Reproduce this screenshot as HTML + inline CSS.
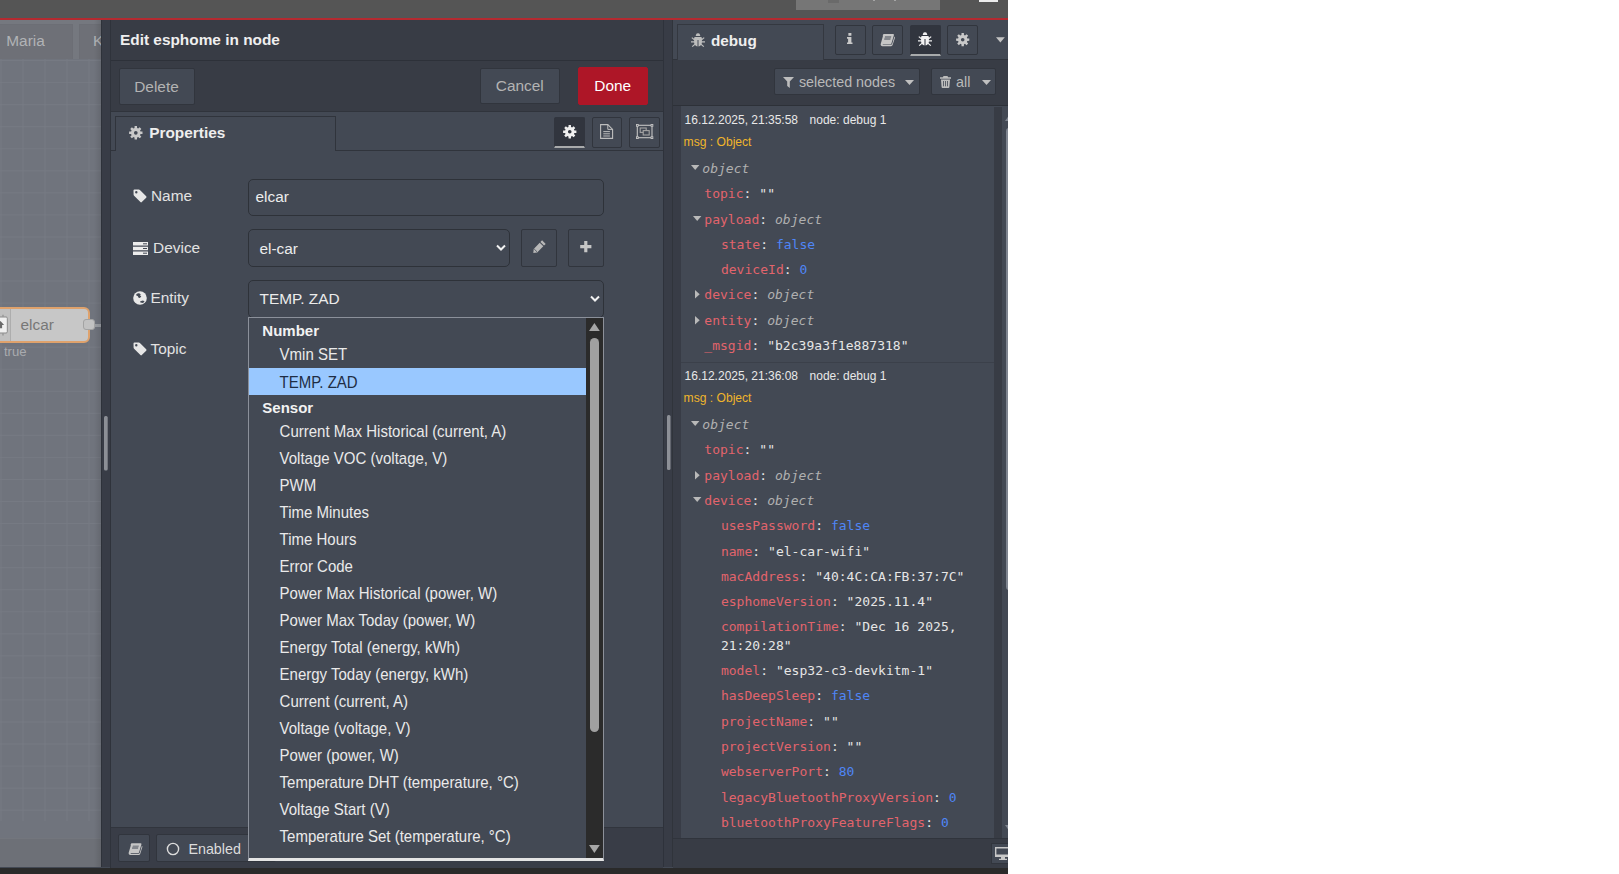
<!DOCTYPE html>
<html lang="en">
<head>
<meta charset="utf-8">
<title>Node-RED</title>
<style>
*{box-sizing:border-box;margin:0;padding:0}
html,body{width:1619px;height:874px;background:#fff;overflow:hidden}
body{font-family:"Liberation Sans",Arial,sans-serif;font-size:15.4px;color:#e4e4e4;position:relative}
#app{position:absolute;left:0;top:0;width:1008px;height:874px;overflow:hidden;background:#434954}
.abs{position:absolute}
svg{display:block;position:absolute;overflow:visible}
/* header */
#hdr{left:0;top:0;width:1008px;height:18px;background:#555555}
#hdrline{left:0;top:17.6px;width:1008px;height:2.8px;background:#b52a30}
#deploy{left:796px;top:0;width:144px;height:10px;background:#767676}
#deploysq{left:828px;top:0;width:11px;height:3px;background:#6a6a6a}
#burger{left:978.5px;top:0;width:19.5px;height:2px;background:#ececec}
/* workspace */
#ws{left:0;top:20px;width:101px;height:847px;background:#70747d;overflow:hidden}
#wstabs{left:0;top:0;width:102px;height:40.5px;background:#75787f}
.wstab{top:4px;height:35.3px;background:#6e7077;border:1px solid #6c6e75;border-bottom:none;color:#b1b3b6;font-size:15.4px;line-height:34px;white-space:nowrap}
#grid{left:0;top:39.3px;width:102px;height:762.2px;
 background-color:#70747d;
 background-image:linear-gradient(to right,#767a83 1px,transparent 1px),linear-gradient(to bottom,#767a83 1px,transparent 1px);
 background-size:22px 22.06px;background-position:0.5px 1.1px}
#wsfoot{left:0;top:818px;width:102px;height:30px;background:#6d7077;border-top:1px solid #73767d}
#node{left:-40px;top:287px;width:130px;height:35.7px;background:#c7c7c7;border:2px solid #dfa26c;border-radius:6px}
#nodeicon{left:-40px;top:289px;width:51px;height:31.7px;background:#c0c0c0;border-right:1px solid #adadad}
#nodelabel{left:20.5px;top:294.6px;font-size:15.4px;color:#777;line-height:20px}
#port{left:83px;top:298.6px;width:11.5px;height:11.5px;background:#c2c2c2;border:1px solid #a3a3a3;border-radius:3px}
#wire{left:94.5px;top:303.5px;width:8px;height:3px;background:#9b9ea3}
#status{left:3.9px;top:324.4px;font-size:13.1px;color:#a9abaf;line-height:16px}
/* tray */
#sepL{left:101px;top:20px;width:9.5px;height:847px;background:#383c46;border-left:1px solid #2e323a}
#tray{left:110px;top:20px;width:553px;height:847px;background:#434954}
#trayhdr{left:0;top:0;width:553px;height:40.5px;background:#383c45;border-bottom:1px solid #2d3139}
#traytitle{left:10px;top:0;line-height:39px;font-weight:bold;font-size:15.4px;color:#efefef}
#traybar{left:0;top:40.5px;width:553px;height:51px;background:#383c45;border-bottom:1px solid #30343c}
.btn{border-radius:2px;background:#434954;border:1px solid #31353d;color:#b3b3b3;font-size:15.4px;text-align:center}
#bDelete{left:8.5px;top:48px;width:76px;height:37px;line-height:35.5px;font-size:15.4px}
#bCancel{left:369.5px;top:48px;width:80.5px;height:36.3px;line-height:34.5px;font-size:15.4px}
#bDone{left:467.5px;top:47px;width:70.5px;height:38.2px;line-height:36.5px;font-size:15.4px;background:#ae1627;border-color:#ae1627;color:#fff}
#tabline{left:0;top:129.7px;width:553px;height:1px;background:#30343c}
#ptab{left:5px;top:96px;width:221px;height:35px;background:#434954;border:1px solid #30343c;border-bottom:none}
#ptabtxt{left:39.2px;top:102.8px;font-weight:bold;font-size:15.4px;line-height:20px;color:#eee}
.tbtn{border-radius:2px;top:97px;width:31px;height:31px;background:#434954;border:1px solid #31353d}
.tbtn.act{border-radius:2px 2px 0 0;background:#31353e;border-color:#31353e;border-bottom:2px solid #a8aaab}
.lbl{font-size:15.4px;color:#e2e2e2;line-height:20px;white-space:nowrap}
.inp{background:#434954;border:1px solid #2e3239;border-radius:5px;color:#ececec;font-size:15.4px;white-space:nowrap}
#trayfoot{left:0;top:806.8px;width:553px;height:41px;background:#393d47;border-top:1px solid #31353d}
/* dropdown */
#dd{left:248px;top:317.2px;width:356px;height:543.8px;background:#434954;border-left:1px solid #8b909a;border-top:1px solid #8b909a;border-right:1px solid #8c9099;border-bottom:3px solid #e4e4e4;overflow:hidden}
#dd .g{position:absolute;left:13.3px;margin-top:0.6px;font-weight:bold;font-size:15px;line-height:27px;color:#f2f2f2;white-space:nowrap}
#dd .o{transform:scaleY(1.06);transform-origin:0 19px;position:absolute;left:30.6px;font-size:15px;line-height:27px;color:#eaeaea;white-space:nowrap}
#ddsel{left:0;top:50px;width:337px;height:27px;background:#99c8ff}
#ddtrack{left:337px;top:0;width:17px;height:541px;background:#2b2b2b}
#ddthumb{left:340.9px;top:19.6px;width:9.1px;height:394px;background:#a0a0a0;border-radius:4.6px}
/* sidebar */
#sepR{left:663px;top:20px;width:10.2px;height:847px;background:#383c46;border-left:1px solid #2e323b;border-right:1px solid #30343b}
#sb{left:672.5px;top:20px;width:336px;height:847px;background:#434954}
#sbtabs{left:0;top:0;width:336px;height:39.5px;background:#434954;border-bottom:1px solid #30343c}
#dtab{left:4.5px;top:4px;width:147px;height:36px;background:#434954;border:1px solid #343840;border-bottom:none}
#dtabtxt{left:38px;top:11px;font-weight:bold;font-size:15.25px;line-height:20px;color:#eee}
.sbtn{border-radius:2px;top:5px;width:31px;height:30.2px;background:#434954;border:1px solid #31353d}
.sbtn.act{border-radius:2px 2px 0 0;background:#31353e;border-color:#31353e;border-bottom:2px solid #a8aaab;height:31px}
#sbbar{left:0;top:39.5px;width:336px;height:46px;background:#383c45;border-bottom:1px solid #2d3138}
.fbtn{border-radius:2px;top:48.3px;height:27px;background:#434954;border:1px solid #31353d;color:#b5b5b5;font-size:14.3px;line-height:25px;white-space:nowrap}
#sbfoot{left:0;top:818px;width:336px;height:29.5px;background:#383c45;border-top:1px solid #30343c}
#msgs{left:0;top:86px;width:336px;height:732px;background:#434954;overflow:hidden}
#mL{left:0;top:0;width:8.5px;height:732px;background:#383c46}
#mR{left:321.5px;top:1px;width:8px;height:731px;background:#383c45}
#msep{left:8.5px;top:254.5px;width:313px;height:1px;background:#3b404a}
.meta{font-size:12px;color:#e8e8e8;line-height:16px;white-space:pre}
.mname{font-size:12.1px;color:#f0b52b;line-height:16px;white-space:pre}
.mono{font-family:"DejaVu Sans Mono","Liberation Mono",monospace;font-size:13px;letter-spacing:0.03px;line-height:18px;white-space:pre;color:#e6e6e6}
.k{color:#e2646c}.t{color:#b0b0b0;font-style:italic}.n{color:#4f86f7}.s{color:#e6e6e6}
#botbar{left:0;top:867.5px;width:1008px;height:7px;background:#2a2a2a}
</style>
</head>
<body>
<div id="app">
<div id="hdr" class="abs"></div>
<div id="deploy" class="abs"></div><div id="deploysq" class="abs"></div><div id="burger" class="abs"></div><div class="abs" style="left:873px;top:0;width:1.500px;height:1px;background:#a5a5a5"></div><div class="abs" style="left:894px;top:0;width:1.500px;height:1px;background:#a5a5a5"></div>
<div id="hdrline" class="abs"></div>
<div id="ws" class="abs">
 <div id="wstabs" class="abs">
  <div class="wstab abs" style="left:-60px;width:132.5px;padding-left:65.3px;line-height:32.5px">Maria</div>
  <div class="wstab abs" style="left:79px;width:60px;padding-left:13px;line-height:32.5px">K</div>
 </div>
 <div id="grid" class="abs"></div>
 <div id="node" class="abs"></div>
 <div id="nodeicon" class="abs"></div>
 <svg style="left:-8px;top:293.600px" width="17" height="22" viewBox="0 0 17 22"><rect x="0" y="3" width="15.300" height="16" rx="1.200" fill="#f0f0f0" stroke="#8a8a8a" stroke-width="1"/><path d="M3 3v-2.200M7 3v-2.200M11 3v-2.200M3 19v2.400M7 19v2.400M11 19v2.400" stroke="#9a9a9a" stroke-width="1.600"/><path d="M8.500 7l3.600 4h-2v3.200h-3.200v-3.200h-2z" fill="#6a6a6a"/></svg>
 <div id="nodelabel" class="abs">elcar</div>
 <div id="wire" class="abs"></div>
 <div id="port" class="abs"></div>
 <div id="status" class="abs">true</div>
 <div id="wsfoot" class="abs"></div>
 <div class="abs" style="left:94px;top:0;width:7px;height:847px;background:linear-gradient(to right,rgba(0,0,0,0),rgba(0,0,0,0.1))"></div>
</div>
<div id="sepL" class="abs"></div>
<svg style="left:104.4px;top:416px" width="4" height="55"><rect x="0" y="0" width="3.7" height="54.6" rx="1.5" fill="#8c8f96"/></svg>

<div id="tray" class="abs">
 <div id="trayhdr" class="abs"><div id="traytitle" class="abs">Edit esphome in node</div></div>
 <div id="traybar" class="abs"></div>
 <div id="bDelete" class="btn abs">Delete</div>
 <div id="bCancel" class="btn abs">Cancel</div>
 <div id="bDone" class="btn abs">Done</div>
 <div id="tabline" class="abs"></div>
 <div id="ptab" class="abs"></div>
 <svg id="icGear1" style="left:18.7px;top:105.8px" width="13.6" height="13.6" viewBox="0 0 14 14"><use href="#gear" fill="#c9c9c9"/></svg>
 <div id="ptabtxt" class="abs">Properties</div>
 <div class="tbtn act abs" style="left:443.5px"></div>
 <div class="tbtn abs" style="left:482px;width:30px"></div>
 <div class="tbtn abs" style="left:518.5px"></div>
 <svg style="left:452.750px;top:104.850px" width="13.500" height="13.500" viewBox="0 0 14 14"><use href="#gear" fill="#f0f0f0"/></svg>
 <svg style="left:490.200px;top:104.100px" width="13.200" height="15" viewBox="0 0 13.200 15"><path d="M0.600 0.600h7.200l4.800 4.800v9h-12z" fill="none" stroke="#bdbdbd" stroke-width="1.100"/><path d="M7.800 0.600v4.800h4.800" fill="none" stroke="#bdbdbd" stroke-width="1"/><path d="M3.300 7.600h6.600M3.300 9.800h6.600M3.300 12h6.600" stroke="#bdbdbd" stroke-width="1"/></svg>
 <svg style="left:525.900px;top:104px" width="17.300" height="15" viewBox="0 0 17.300 15"><rect x="1.300" y="1.300" width="14.700" height="12.400" fill="none" stroke="#c4c4c4" stroke-width="1.100"/><rect x="4.200" y="4" width="6" height="4.400" fill="none" stroke="#a4a4a4" stroke-width="1.100"/><rect x="7.200" y="6.600" width="6" height="4.400" fill="#434954" stroke="#a4a4a4" stroke-width="1.100"/><rect x="0" y="0" width="2.700" height="2.700" fill="#c4c4c4"/><rect x="14.600" y="0" width="2.700" height="2.700" fill="#c4c4c4"/><rect x="0" y="12.300" width="2.700" height="2.700" fill="#c4c4c4"/><rect x="14.600" y="12.300" width="2.700" height="2.700" fill="#c4c4c4"/><rect x="0.900" y="0.900" width="0.900" height="0.900" fill="#434954"/><rect x="15.500" y="0.900" width="0.900" height="0.900" fill="#434954"/><rect x="0.900" y="13.200" width="0.900" height="0.900" fill="#434954"/><rect x="15.500" y="13.200" width="0.900" height="0.900" fill="#434954"/></svg>

 <svg style="left:22.5px;top:169px" width="14" height="14" viewBox="0 0 14 14"><use href="#tag" fill="#e6e6e6"/></svg>
 <div class="lbl abs" style="left:41px;top:165.8px">Name</div>
 <div class="inp abs" style="left:137.5px;top:159px;width:356px;height:36.5px;line-height:33.6px;padding-left:7px">elcar</div>

 <svg style="left:22.5px;top:222px" width="15" height="13" viewBox="0 0 15 13"><path d="M0 0h15v3.6h-15zM0 4.7h15v3.6h-15zM0 9.4h15v3.6h-15z" fill="#ececec"/><path d="M10 1.8h4M10 6.5h4M10 11.2h4" stroke="#434954" stroke-width="1"/></svg>
 <div class="lbl abs" style="left:43.1px;top:218.2px">Device</div>
 <div class="inp abs" style="left:137.5px;top:209px;width:262px;height:38px;line-height:37px;padding-left:11px">el-car</div>
 <svg style="left:385.5px;top:224px" width="10" height="8" viewBox="0 0 10 8"><path d="M1 1.5l4 4 4-4" fill="none" stroke="#f2f2f2" stroke-width="2"/></svg>
 <div class="btn abs" style="left:410.5px;top:209px;width:36px;height:38px"></div>
 <div class="btn abs" style="left:457.5px;top:209px;width:36px;height:38px"></div>
 <svg style="left:422.600px;top:220.400px" width="13" height="13" viewBox="0 0 13 13"><path d="M9.100 0.300l3.600 3.600-1.700 1.700-3.600-3.600zM6.700 2.700l3.600 3.600-6.100 6.100-3.900 0.500 0.400-4z" fill="#b8b8b8"/><path d="M1.200 9l2.800 2.800" stroke="#434954" stroke-width="0.800"/></svg>
 <svg style="left:470px;top:221px" width="11.600" height="11.200" viewBox="0 0 12 12"><path d="M4.300 0h3.400v4.300h4.300v3.400h-4.300v4.300h-3.400v-4.300h-4.300v-3.400h4.300z" fill="#c6c6c6"/></svg>

 <svg style="left:22.5px;top:271px" width="14" height="14" viewBox="0 0 14 14"><circle cx="7" cy="7" r="6.8" fill="#e8e8e8"/><path d="M3.2 3.2c1.2-1 2.5-1.2 3.3-0.8l1.3 0.9-0.8 1 1.3 1.3-1.5 1.5-1.2-0.4-0.9-1.6-1.2-0.3z" fill="#434954"/><path d="M7.2 10.2l2.8-0.6 1.6 0.8-1.6 1.6-2.6-0.4z" fill="#434954"/></svg>
 <div class="lbl abs" style="left:40.5px;top:267.5px">Entity</div>
 <div class="inp abs" style="left:137.5px;top:260px;width:356px;height:38px;line-height:35.4px;padding-left:11px">TEMP. ZAD</div>
 <svg style="left:479.7px;top:275px" width="10" height="8" viewBox="0 0 10 8"><path d="M1 1.5l4 4 4-4" fill="none" stroke="#f2f2f2" stroke-width="2"/></svg>

 <svg style="left:22.5px;top:322px" width="14" height="14" viewBox="0 0 14 14"><use href="#tag" fill="#e6e6e6"/></svg>
 <div class="lbl abs" style="left:40.5px;top:318.5px">Topic</div>

 <div id="trayfoot" class="abs"></div>
 <div class="abs" style="left:0;top:0;width:1px;height:847.5px;background:#2f333b"></div>
 <div class="btn abs" style="left:8.400px;top:814.400px;width:32px;height:27.600px"></div>
 <svg style="left:17.9px;top:822.8px" width="13.5" height="12" viewBox="0 0 14 12"><use href="#book" fill="#c6c6c6"/></svg>
 <div class="btn abs" style="left:46.400px;top:814.400px;width:120px;height:27.600px"></div>
 <svg style="left:55.500px;top:822px" width="14" height="14" viewBox="0 0 14 14"><circle cx="7" cy="7" r="5.600" fill="none" stroke="#dcdcdc" stroke-width="1.400"/></svg>
 <div class="abs" style="left:78.400px;top:819.300px;font-size:14.300px;line-height:20px;color:#dcdcdc">Enabled</div>
</div>
<svg style="left:0;top:0" width="0" height="0"><defs>
 <path id="gear" d="M5.67 2.18L5.78 0.11L8.22 0.11L8.33 2.18L9.46 2.65L11.01 1.26L12.74 2.99L11.35 4.54L11.82 5.67L13.89 5.78L13.89 8.22L11.82 8.33L11.35 9.46L12.74 11.01L11.01 12.74L9.46 11.35L8.33 11.82L8.22 13.89L5.78 13.89L5.67 11.82L4.54 11.35L2.99 12.74L1.26 11.01L2.65 9.46L2.18 8.33L0.11 8.22L0.11 5.78L2.18 5.67L2.65 4.54L1.26 2.99L2.99 1.26L4.54 2.65ZM5.10 7a1.90 1.90 0 1 0 3.80 0a1.90 1.90 0 1 0 -3.80 0Z" fill-rule="evenodd"/>
 <path id="tag" d="M0.500 1.500a1 1 0 0 1 1-1h4.300a1.600 1.600 0 0 1 1.100.500l6.300 6.300a1 1 0 0 1 0 1.400l-4.400 4.400a1 1 0 0 1-1.400 0l-6.300-6.300a1.600 1.600 0 0 1-.5-1.100zM3.300 4.500a1.200 1.200 0 1 0 0-2.400 1.200 1.200 0 0 0 0 2.400z" fill-rule="evenodd"/>
 <path id="book" d="M3.600 0h9.400a1 1 0 0 1 .9 1.300l-2.400 8a1.200 1.200 0 0 1-1.100.9h-7.400c-.3 0-.4.500 0 .6h7.800c.7 0 1.200-.5 1.400-1l2.200-7.200c.5.300.6.800.5 1.300l-2.300 7.200a1.600 1.600 0 0 1-1.500 1.100h-8.700c-1.200 0-2-1.100-1.700-2.200l2.200-7.700a2 2 0 0 1 .7-2.300zM5 2.500l-.3.900h6.300l.3-.9zM4.400 4.500l-.3.900h6.300l.3-.9z" fill-rule="evenodd"/>
</defs></svg>

<div id="dd" class="abs">
 <div id="ddsel" class="abs"></div>
 <div class="g" style="top:0px;line-height:23px">Number</div>
 <div class="o" style="top:23px;line-height:27px">Vmin SET</div>
 <div class="o" style="top:50.6px;line-height:27px;color:#1f2d44">TEMP. ZAD</div>
 <div class="g" style="top:77px;line-height:23px">Sensor</div>
 <div class="o" style="top:100px;line-height:27px">Current Max Historical (current, A)</div>
 <div class="o" style="top:127px;line-height:27px">Voltage VOC (voltage, V)</div>
 <div class="o" style="top:154px;line-height:27px">PWM</div>
 <div class="o" style="top:181px;line-height:27px">Time Minutes</div>
 <div class="o" style="top:208px;line-height:27px">Time Hours</div>
 <div class="o" style="top:235px;line-height:27px">Error Code</div>
 <div class="o" style="top:262px;line-height:27px">Power Max Historical (power, W)</div>
 <div class="o" style="top:289px;line-height:27px">Power Max Today (power, W)</div>
 <div class="o" style="top:316px;line-height:27px">Energy Total (energy, kWh)</div>
 <div class="o" style="top:343px;line-height:27px">Energy Today (energy, kWh)</div>
 <div class="o" style="top:370px;line-height:27px">Current (current, A)</div>
 <div class="o" style="top:397px;line-height:27px">Voltage (voltage, V)</div>
 <div class="o" style="top:424px;line-height:27px">Power (power, W)</div>
 <div class="o" style="top:451px;line-height:27px">Temperature DHT (temperature, °C)</div>
 <div class="o" style="top:478px;line-height:27px">Voltage Start (V)</div>
 <div class="o" style="top:505px;line-height:27px">Temperature Set (temperature, °C)</div>
 <div id="ddtrack" class="abs"></div>
 <div id="ddthumb" class="abs"></div>
 <svg style="left:340.100px;top:4.600px" width="10.800" height="8" viewBox="0 0 11 8"><path d="M0 8l5.500-8 5.500 8z" fill="#a6a6a6"/></svg>
 <svg style="left:340.100px;top:526.800px" width="10.800" height="8" viewBox="0 0 11 8"><path d="M0 0l5.500 8 5.500-8z" fill="#a6a6a6"/></svg>
</div>
<!--SB0--><div id="sb" class="abs">
 <div id="sbtabs" class="abs"></div>
 <div id="dtab" class="abs"></div>
 <svg style="left:18.5px;top:14.2px" width="14" height="14" viewBox="0 0 14 14"><use href="#bug" fill="#bdbdbd"/></svg>
 <div id="dtabtxt" class="abs" style="left:38.5px;top:11.4px">debug</div>
 <div class="sbtn abs" style="left:162.5px"></div>
 <div class="sbtn abs" style="left:199.5px"></div>
 <div class="sbtn act abs" style="left:237.5px"></div>
 <div class="sbtn abs" style="left:274.5px"></div>
 <svg style="left:174.7px;top:13.4px" width="5.500" height="11.200" viewBox="0 0 6 12"><path d="M1.500 0h3.300v2.800h-3.300zM0 4.300h4.800v5.900h1.200v1.800h-6v-1.800h1.200v-4.100h-1.200z" fill="#c9c9c9"/></svg>
 <svg style="left:207.1px;top:13.6px" width="14" height="12" viewBox="0 0 14 12"><use href="#book" fill="#c6c6c6"/></svg>
 <svg style="left:245.2px;top:13.2px" width="14" height="14" viewBox="0 0 14 14"><use href="#bug" fill="#f2f2f2"/></svg>
 <svg style="left:283px;top:13px" width="13.400" height="13.400" viewBox="0 0 14 14"><use href="#gear" fill="#c9c9c9"/></svg>
 <svg style="left:323.3px;top:17px" width="8.800" height="5.800" viewBox="0 0 10 6"><path d="M0 0h10l-5 6z" fill="#c4c4c4"/></svg>
 <div id="sbbar" class="abs"></div>
 <div class="fbtn abs" style="left:101.5px;width:146.200px"></div>
 <svg style="left:110.7px;top:57.3px" width="11" height="11" viewBox="0 0 11 11"><path d="M0 0h11l-4.200 4.600v6.400l-2.600-2v-4.400z" fill="#bdbdbd"/></svg>
 <div class="abs" style="left:126.4px;top:52.8px;font-size:14.3px;line-height:18px;color:#b9b9b9;white-space:nowrap">selected nodes</div>
 <svg style="left:232.1px;top:60px" width="9" height="5" viewBox="0 0 9 5"><path d="M0 0h9l-4.500 5z" fill="#c0c0c0"/></svg>
 <div class="fbtn abs" style="left:258.5px;width:65.200px"></div>
 <svg style="left:267.9px;top:56px" width="11" height="12" viewBox="0 0 11 12"><path d="M3.500 0h4l.6 1.300h2.900v1.400h-11v-1.400h2.900zM1 3.500h9l-.6 7.600a1 1 0 0 1-1 .9h-5.800a1 1 0 0 1-1-.9z" fill="#bdbdbd"/><path d="M3.500 5v5.300M5.500 5v5.300M7.500 5v5.300" stroke="#434954" stroke-width="0.8"/></svg>
 <div class="abs" style="left:283.6px;top:52.8px;font-size:14.3px;line-height:18px;color:#b9b9b9;white-space:nowrap">all</div>
 <svg style="left:309.5px;top:60px" width="9" height="5" viewBox="0 0 9 5"><path d="M0 0h9l-4.500 5z" fill="#c0c0c0"/></svg>
 <div id="msgs" class="abs">
  <div id="mL" class="abs"></div><div id="mR" class="abs"></div><div id="msep" class="abs" style="top:255.6px"></div>
  <div class="meta abs" style="left:12.1px;top:5.5px">16.12.2025, 21:35:58</div>
  <div class="meta abs" style="left:137.1px;top:5.5px">node: debug 1</div>
  <div class="mname abs" style="left:11.1px;top:27.8px">msg : Object</div>
  <svg style="left:18.4px;top:59.3px" width="8.400" height="5" viewBox="0 0 8.400 5"><path d="M0 0h8.400l-4.200 5z" fill="#b9b9b9"/></svg>
  <div class="mono abs" style="left:29.8px;top:53.75px"><span class="t">object</span></div>
  <div class="mono abs" style="left:31.8px;top:78.75px"><span class="k">topic</span>: <span class="s">""</span></div>
  <svg style="left:20.3px;top:110.3px" width="8.400" height="5" viewBox="0 0 8.400 5"><path d="M0 0h8.400l-4.200 5z" fill="#b9b9b9"/></svg>
  <div class="mono abs" style="left:31.8px;top:104.75px"><span class="k">payload</span>: <span class="t">object</span></div>
  <div class="mono abs" style="left:48.4px;top:129.75px"><span class="k">state</span>: <span class="n">false</span></div>
  <div class="mono abs" style="left:48.4px;top:154.75px"><span class="k">deviceId</span>: <span class="n">0</span></div>
  <svg style="left:22.1px;top:183.7px" width="4.700" height="8.600" viewBox="0 0 4.700 8.600"><path d="M0 0v8.600l4.700-4.300z" fill="#b9b9b9"/></svg>
  <div class="mono abs" style="left:31.8px;top:179.75px"><span class="k">device</span>: <span class="t">object</span></div>
  <svg style="left:22.1px;top:209.7px" width="4.700" height="8.600" viewBox="0 0 4.700 8.600"><path d="M0 0v8.600l4.700-4.300z" fill="#b9b9b9"/></svg>
  <div class="mono abs" style="left:31.8px;top:205.75px"><span class="k">entity</span>: <span class="t">object</span></div>
  <div class="mono abs" style="left:31.8px;top:230.75px"><span class="k">_msgid</span>: <span class="s">"b2c39a3f1e887318"</span></div>
  <div class="meta abs" style="left:12.1px;top:261.5px">16.12.2025, 21:36:08</div>
  <div class="meta abs" style="left:137.1px;top:261.5px">node: debug 1</div>
  <div class="mname abs" style="left:11.1px;top:283.8px">msg : Object</div>
  <svg style="left:18.4px;top:315.3px" width="8.400" height="5" viewBox="0 0 8.400 5"><path d="M0 0h8.400l-4.200 5z" fill="#b9b9b9"/></svg>
  <div class="mono abs" style="left:29.8px;top:309.75px"><span class="t">object</span></div>
  <div class="mono abs" style="left:31.8px;top:334.75px"><span class="k">topic</span>: <span class="s">""</span></div>
  <svg style="left:22.1px;top:364.7px" width="4.700" height="8.600" viewBox="0 0 4.700 8.600"><path d="M0 0v8.600l4.700-4.300z" fill="#b9b9b9"/></svg>
  <div class="mono abs" style="left:31.8px;top:360.75px"><span class="k">payload</span>: <span class="t">object</span></div>
  <svg style="left:20.3px;top:391.3px" width="8.400" height="5" viewBox="0 0 8.400 5"><path d="M0 0h8.400l-4.200 5z" fill="#b9b9b9"/></svg>
  <div class="mono abs" style="left:31.8px;top:385.75px"><span class="k">device</span>: <span class="t">object</span></div>
  <div class="mono abs" style="left:48.4px;top:410.75px"><span class="k">usesPassword</span>: <span class="n">false</span></div>
  <div class="mono abs" style="left:48.4px;top:436.75px"><span class="k">name</span>: <span class="s">"el-car-wifi"</span></div>
  <div class="mono abs" style="left:48.4px;top:461.75px"><span class="k">macAddress</span>: <span class="s">"40:4C:CA:FB:37:7C"</span></div>
  <div class="mono abs" style="left:48.4px;top:486.75px"><span class="k">esphomeVersion</span>: <span class="s">"2025.11.4"</span></div>
  <div class="mono abs" style="left:48.4px;top:511.75px"><span class="k">compilationTime</span>: <span class="s">"Dec 16 2025,</span></div>
  <div class="mono abs" style="left:48.4px;top:530.75px"><span class="s">21:20:28"</span></div>
  <div class="mono abs" style="left:48.4px;top:555.75px"><span class="k">model</span>: <span class="s">"esp32-c3-devkitm-1"</span></div>
  <div class="mono abs" style="left:48.4px;top:580.75px"><span class="k">hasDeepSleep</span>: <span class="n">false</span></div>
  <div class="mono abs" style="left:48.4px;top:606.75px"><span class="k">projectName</span>: <span class="s">""</span></div>
  <div class="mono abs" style="left:48.4px;top:631.75px"><span class="k">projectVersion</span>: <span class="s">""</span></div>
  <div class="mono abs" style="left:48.4px;top:656.75px"><span class="k">webserverPort</span>: <span class="n">80</span></div>
  <div class="mono abs" style="left:48.4px;top:682.75px"><span class="k">legacyBluetoothProxyVersion</span>: <span class="n">0</span></div>
  <div class="mono abs" style="left:48.4px;top:707.75px"><span class="k">bluetoothProxyFeatureFlags</span>: <span class="n">0</span></div>
 </div>
 <div id="sbfoot" class="abs"></div>
 <div class="abs" style="left:318.9px;top:823.4px;width:30px;height:20.500px;background:#434954;border:1px solid #31353d"></div>
 <svg style="left:322.5px;top:827px" width="16" height="13" viewBox="0 0 16 13"><path d="M0 0h16v10h-16zM1.400 1.400v6.200h13.200v-6.200z" fill="#c8c8c8" fill-rule="evenodd"/><path d="M6 10h4v1.800h2v1.200h-8v-1.200h2z" fill="#c8c8c8"/></svg>
</div>
<div id="sepR" class="abs"></div>
<svg style="left:666.5px;top:415px" width="4" height="55"><rect x="0" y="0" width="3.500" height="55" rx="1.500" fill="#8d9097"/></svg>
<svg style="left:0;top:0" width="0" height="0"><defs>
 <path id="bug" d="M5 0.800a2.100 2.100 0 0 1 4 0l.3 1.200h-4.600zM4.100 2.900h5.800a1.200 1.200 0 0 1 1 1v.9l1.900-1.600.8.900-2.700 2.100v1.100h3.100v1.200h-3.100c0 .5-.1 1-.3 1.400l2.600 2.300-.8.900-2.400-2.100c-.6.800-1.500 1.300-2.500 1.400v-6.300h-1v6.300c-1-.1-1.900-.6-2.500-1.400l-2.400 2.100-.8-.9 2.600-2.300a4 4 0 0 1-.3-1.400h-3.100v-1.200h3.100v-1.100l-2.700-2.100.8-.9 1.900 1.600v-.9a1.200 1.200 0 0 1 1-1z"/>
</defs></svg>
<!--SB1-->

<div class="abs" style="left:1005.7px;top:128px;width:6px;height:462px;background:#7f8590;border-radius:3px"></div>
<svg style="left:1004.6px;top:115.5px" width="7" height="5" viewBox="0 0 7 5"><path d="M0 5l3.500-5 3.500 5z" fill="#7d838e"/></svg>
<svg style="left:1004.6px;top:824.5px" width="7" height="5" viewBox="0 0 7 5"><path d="M0 0l3.500 5 3.500-5z" fill="#7d838e"/></svg>
<div id="botbar" class="abs"></div>
</div>
</body>
</html>
